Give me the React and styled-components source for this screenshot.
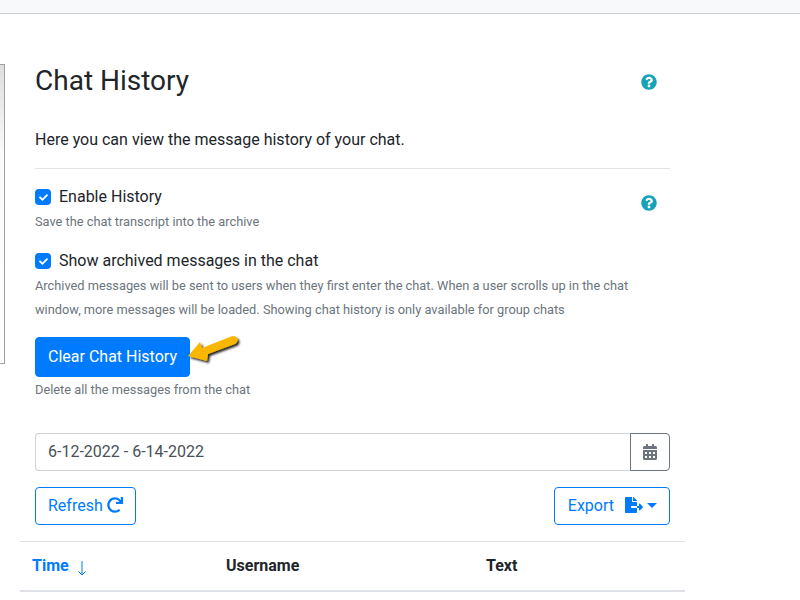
import React from 'react';
import styled, { createGlobalStyle } from 'styled-components';
import { FaQuestionCircle, FaCheck, FaCalendarAlt, FaRedo, FaFileExport } from 'react-icons/fa';

const Global = createGlobalStyle`
html, body { margin: 0; padding: 0; background: #fff; height: 600px; overflow: hidden; }
body { font-family: Roboto, "Liberation Sans", sans-serif; font-size: 16px; color: #212529; }
* { box-sizing: border-box; }
`
const TopBar = styled.div`
height: 14px;
background: #f8f9fa;
border-bottom: 1px solid #cfcfcf;
`
const Page = styled.div`
display: flex;
align-items: flex-start;
`
const SidePanel = styled.div`
width: 5px;
height: 300px;
margin-top: 50px;
border: 1px solid #a0a0a0;
border-left: none;
background: linear-gradient(to bottom, #dedede, #fafafa 30%, #fff);
`
const Main = styled.div`
width: 665px;
margin-left: 15px;
`
const Content = styled.div`
width: 650px;
padding-left: 15px;
`
const TitleRow = styled.div`
display: flex;
justify-content: space-between;
align-items: center;
padding: 50px 13px 0 0;
height: 84px;
`
const Title = styled.h3`
margin: 0;
font-size: 28px;
font-weight: 400;
line-height: 34px;
`
const Help = styled(FaQuestionCircle)`
color: #17a2b8;
font-size: 16px;
display: block;
flex: none;
margin-top: ${p => p.$top}px;
`
const Intro = styled.p`
margin: 0;
padding-top: 30px;
line-height: 24px;
`
const Divider = styled.hr`
margin: 16px 0 0;
border: none;
border-top: 1px solid #e2e3e5;
`
const OptionBlock = styled.div`
display: flex;
align-items: flex-start;
justify-content: space-between;
padding-right: 13px;
margin-top: 16px;
`
const CheckLabel = styled.label`
display: flex;
align-items: center;
gap: 8px;
line-height: 24px;
margin-top: ${p => p.$top || 0}px;
`
const CheckBox = styled.span`
width: 16px;
height: 16px;
border-radius: 4px;
background: #007bff;
color: #fff;
display: flex;
align-items: center;
justify-content: center;
font-size: 9px;
`
const Hint = styled.div`
font-size: 12.8px;
line-height: 24px;
color: #6c757d;
margin-top: ${p => p.$top || 0}px;
`
const ButtonWrap = styled.div`
position: relative;
`
const PrimaryButton = styled.button`
display: block;
height: 40px;
width: 155px;
margin-top: 15px;
background: #007bff;
color: #fff;
border: 1px solid #007bff;
border-radius: 4px;
font: 400 16px Roboto, sans-serif;
padding: 0 0 2px;
`
const Arrow = styled.svg`
position: absolute;
left: 150px;
top: -10px;
`
const DateGroup = styled.div`
display: flex;
height: 38px;
margin-top: 31px;
`
const DateInput = styled.div`
flex: 1;
border: 1px solid #ced4da;
border-right: none;
border-radius: 4px 0 0 4px;
padding: 0 12px;
line-height: 36px;
color: #495057;
`
const CalButton = styled.div`
width: 40px;
border: 1px solid #6c757d;
border-radius: 0 4px 4px 0;
color: #6c757d;
display: flex;
align-items: center;
justify-content: center;
font-size: 16px;
`
const Actions = styled.div`
display: flex;
justify-content: space-between;
margin-top: 16px;
`
const OutlineButton = styled.button`
display: flex;
align-items: center;
height: 38px;
padding: 0 12px 2px ${p => p.$left}px;
gap: ${p => p.$gap}px;
background: #fff;
color: #007bff;
border: 1px solid #007bff;
border-radius: 4px;
font: 400 16px Roboto, sans-serif;
`
const ExportIcon = styled(FaFileExport)`
width: 18px;
height: 16px;
`
const Caret = styled.span`
width: 0;
height: 0;
margin-left: -7px;
border-top: 5px solid #007bff;
border-left: 5px solid transparent;
border-right: 5px solid transparent;
`
const Table = styled.table`
width: 665px;
margin-top: 16px;
border-collapse: collapse;
table-layout: fixed;
`
const Th = styled.th`
height: 49px;
padding: 1px 12px 0;
text-align: left;
font-size: 16px;
line-height: 24px;
font-weight: 700;
width: ${p => p.$w}px;
color: ${p => p.$active ? '#007bff' : '#212529'};
border-top: 1px solid #dee2e6;
border-bottom: 2px solid #dee2e6;
`
const SortArrow = styled.svg`
margin-left: 8px;
vertical-align: -5px;
`

export default function App() {
  return (
    <>
      <Global />
      <TopBar />
      <Page>
        <SidePanel />
        <Main>
          <Content>
            <TitleRow>
              <Title>Chat History</Title>
              <Help $top={2} />
            </TitleRow>
            <Intro>Here you can view the message history of your chat.</Intro>
            <Divider />
            <OptionBlock>
              <div>
                <CheckLabel><CheckBox><FaCheck /></CheckBox>Enable History</CheckLabel>
                <Hint $top={1}>Save the chat transcript into the archive</Hint>
              </div>
              <Help $top={10} />
            </OptionBlock>
            <CheckLabel $top={15}><CheckBox><FaCheck /></CheckBox>Show archived messages in the chat</CheckLabel>
            <Hint $top={1}>
              Archived messages will be sent to users when they first enter the chat. When a user scrolls up in the chat<br />
              window, more messages will be loaded. Showing chat history is only available for group chats
            </Hint>
            <ButtonWrap>
              <PrimaryButton>Clear Chat History</PrimaryButton>
              <Arrow width="60" height="45" viewBox="0 0 60 45">
                <defs>
                  <filter id="arrowShadow" x="-20%" y="-20%" width="150%" height="160%">
                    <feDropShadow dx="2" dy="2" stdDeviation="1.2" floodColor="#000" floodOpacity="0.85" />
                  </filter>
                </defs>
                <path d="M3 29 L15 15 L17 21 L46 9.5 Q50 8 52 11 Q53.5 15 50 17 L23 27 L22 34 Z" fill="#fab700" filter="url(#arrowShadow)" />
              </Arrow>
            </ButtonWrap>
            <Hint $top={1}>Delete all the messages from the chat</Hint>
            <DateGroup>
              <DateInput>6-12-2022 - 6-14-2022</DateInput>
              <CalButton><FaCalendarAlt /></CalButton>
            </DateGroup>
            <Actions>
              <OutlineButton $left={12} $gap={4}>Refresh <FaRedo /></OutlineButton>
              <OutlineButton $left={13} $gap={11}>Export <ExportIcon /><Caret /></OutlineButton>
            </Actions>
          </Content>
          <Table>
            <thead>
              <tr>
                <Th $w={194} $active>
                  Time
                  <SortArrow width="10" height="16" viewBox="0 0 10 16" fill="none" stroke="#007bff" strokeWidth="1">
                    <path d="M5 1 V15 M1.5 11.5 L5 15 L8.5 11.5" />
                  </SortArrow>
                </Th>
                <Th $w={260}>Username</Th>
                <Th>Text</Th>
              </tr>
            </thead>
          </Table>
        </Main>
      </Page>
    </>
  );
}
